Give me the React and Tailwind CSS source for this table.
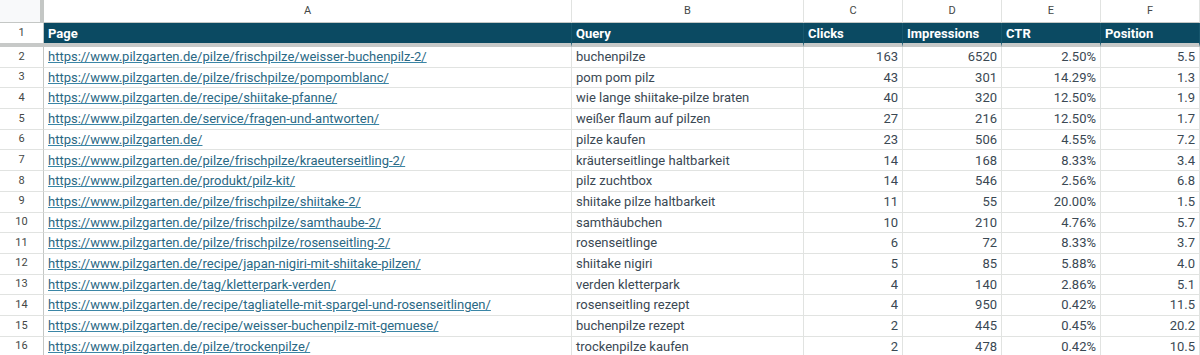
const rows = [
  ['https://www.pilzgarten.de/pilze/frischpilze/weisser-buchenpilz-2/', 'buchenpilze', '163', '6520', '2.50%', '5.5'],
  ['https://www.pilzgarten.de/pilze/frischpilze/pompomblanc/', 'pom pom pilz', '43', '301', '14.29%', '1.3'],
  ['https://www.pilzgarten.de/recipe/shiitake-pfanne/', 'wie lange shiitake-pilze braten', '40', '320', '12.50%', '1.9'],
  ['https://www.pilzgarten.de/service/fragen-und-antworten/', 'weißer flaum auf pilzen', '27', '216', '12.50%', '1.7'],
  ['https://www.pilzgarten.de/', 'pilze kaufen', '23', '506', '4.55%', '7.2'],
  ['https://www.pilzgarten.de/pilze/frischpilze/kraeuterseitling-2/', 'kräuterseitlinge haltbarkeit', '14', '168', '8.33%', '3.4'],
  ['https://www.pilzgarten.de/produkt/pilz-kit/', 'pilz zuchtbox', '14', '546', '2.56%', '6.8'],
  ['https://www.pilzgarten.de/pilze/frischpilze/shiitake-2/', 'shiitake pilze haltbarkeit', '11', '55', '20.00%', '1.5'],
  ['https://www.pilzgarten.de/pilze/frischpilze/samthaube-2/', 'samthäubchen', '10', '210', '4.76%', '5.7'],
  ['https://www.pilzgarten.de/pilze/frischpilze/rosenseitling-2/', 'rosenseitlinge', '6', '72', '8.33%', '3.7'],
  ['https://www.pilzgarten.de/recipe/japan-nigiri-mit-shiitake-pilzen/', 'shiitake nigiri', '5', '85', '5.88%', '4.0'],
  ['https://www.pilzgarten.de/tag/kletterpark-verden/', 'verden kletterpark', '4', '140', '2.86%', '5.1'],
  ['https://www.pilzgarten.de/recipe/tagliatelle-mit-spargel-und-rosenseitlingen/', 'rosenseitling rezept', '4', '950', '0.42%', '11.5'],
  ['https://www.pilzgarten.de/recipe/weisser-buchenpilz-mit-gemuese/', 'buchenpilze rezept', '2', '445', '0.45%', '20.2'],
  ['https://www.pilzgarten.de/pilze/trockenpilze/', 'trockenpilze kaufen', '2', '478', '0.42%', '10.5'],
];

const letters = ['A', 'B', 'C', 'D', 'E', 'F'];
const headers = ['Page', 'Query', 'Clicks', 'Impressions', 'CTR', 'Position'];

const App = () => {
  return (
    <div className="w-[1200px] h-[355px] overflow-hidden bg-white font-['Roboto',sans-serif]">
      <div className="grid grid-cols-[44px_528px_232px_99px_99px_99px_99px]">
        {/* column letters */}
        <div className="h-[23px] bg-[#f8f9fa] border-r-4 border-b border-r-[#c4c7c5] border-b-[#c4c7c5]" />
        {letters.map((l) => (
          <div
            key={l}
            className="h-[23px] flex items-center justify-center text-[11px] text-[#444746] border-r border-b border-r-[#e1e3e1] border-b-[#c4c7c5]"
          >
            {l}
          </div>
        ))}

        {/* header row 1 */}
        <div className="h-[24px] flex items-center justify-center text-[11px] text-[#444746] border-r border-r-[#c4c7c5] border-b-4 border-b-[#c7c9c8]">
          1
        </div>
        {headers.map((h) => (
          <div
            key={h}
            className="h-[24px] flex items-center px-[4px] pt-px bg-[#0b4a62] text-white font-bold text-[13px] border-r border-r-[#16566d] border-b-4 border-b-[#c7c9c8]"
          >
            {h}
          </div>
        ))}

        {/* data rows */}
        {rows.map((r, i) => (
          <div key={i} className="contents">
            <div className="h-[20.7px] flex items-center justify-center text-[11px] text-[#444746] border-r border-b border-r-[#c4c7c5] border-b-[#e1e3e1]">
              {i + 2}
            </div>
            <div className="h-[20.7px] flex items-center px-[4px] text-[13px] border-r border-b border-[#e1e3e1] overflow-hidden whitespace-nowrap">
              <a className="text-[#2a6884] underline decoration-[#3a86a6]">{r[0]}</a>
            </div>
            <div className="h-[20.7px] flex items-center px-[4px] text-[13px] text-[#3a4853] border-r border-b border-[#e1e3e1] whitespace-nowrap">
              {r[1]}
            </div>
            {r.slice(2).map((v, j) => (
              <div
                key={j}
                className="h-[20.7px] flex items-center justify-end px-[4px] text-[13px] text-[#3a4853] border-r border-b border-[#e1e3e1]"
              >
                {v}
              </div>
            ))}
          </div>
        ))}
      </div>
    </div>
  );
};

export default App;
